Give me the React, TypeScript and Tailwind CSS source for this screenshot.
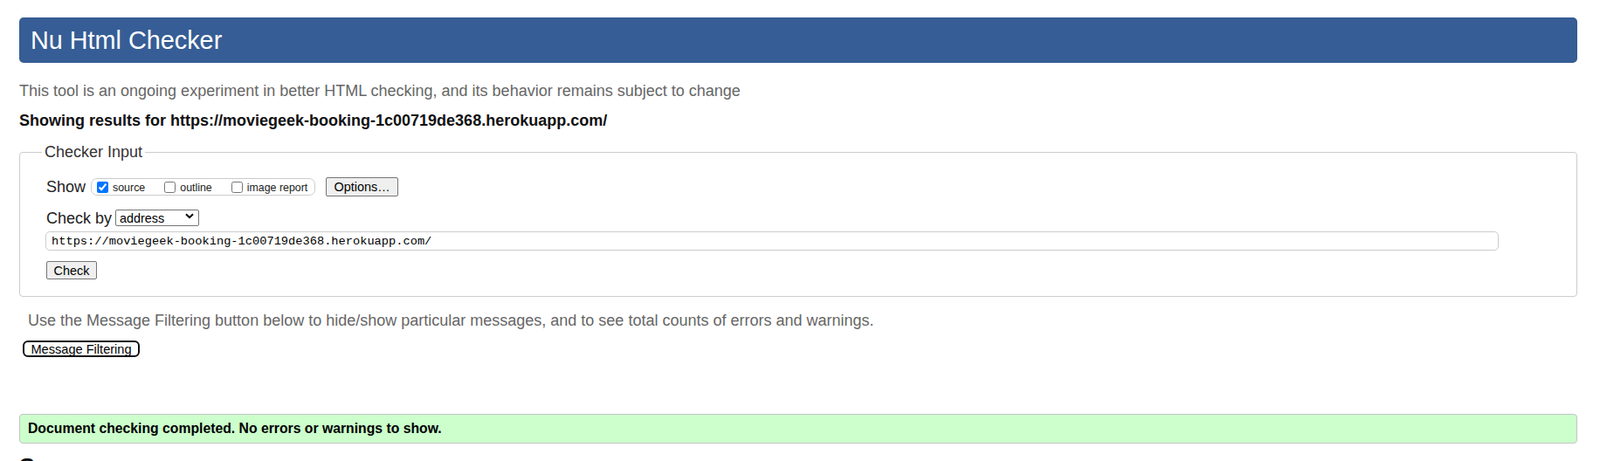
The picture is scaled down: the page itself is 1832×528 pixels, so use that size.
import React from "react";

const URL = "https://moviegeek-booking-1c00719de368.herokuapp.com/";

const ShowOption = ({ label, checked }: { label: string; checked?: boolean }) => (
  <label className="flex items-center">
    <input type="checkbox" defaultChecked={checked} className="h-[13px] w-[13px] accent-[#0075ff]" />
    <span className="ml-[5px] mt-[2px] text-[12.4px] leading-[14px] text-[#222]">{label}</span>
  </label>
);

const App = () => {
  return (
    <div className="min-h-[528px] bg-white pl-[22px] pr-[26px] pt-[20px] font-['Liberation_Sans',Arial,sans-serif] text-[#222]">
      <h1 className="h-[52px] rounded-[5px] bg-[#365d95] pl-[13px] text-[28.8px] font-normal leading-[52px] text-white">
        Nu Html Checker
      </h1>

      <p className="mt-[22px] text-[18px] leading-[20px] text-[#666]">
        This tool is an ongoing experiment in better HTML checking, and its behavior remains subject to change
      </p>
      <p className="mt-[14px] text-[18px] font-bold leading-[20px] text-[#111]">Showing results for {URL}</p>

      <fieldset className="mt-[16px] rounded-[4px] border border-[#ccc] pb-[19px] pl-[30px]">
        <legend className="-ml-[5px] px-[3px] text-[18px] leading-[20px] text-[#333]">Checker Input</legend>

        <div className="mt-[19px] flex h-[22px] items-center">
          <span className="text-[18px] leading-[20px]">Show</span>
          <div className="ml-[6px] flex h-[20px] w-[257px] items-center gap-[22px] rounded-[7px] border border-[#ccc] pl-[6px]">
            <ShowOption label="source" checked />
            <ShowOption label="outline" />
            <ShowOption label="image report" />
          </div>
          <button className="ml-[12px] h-[22px] w-[83px] rounded-[2px] border border-[#767676] bg-[#efefef] text-[14.4px] leading-[18px] text-black">
            Options…
          </button>
        </div>

        <div className="mt-[15px] flex h-[19px] items-center">
          <span className="text-[18px] leading-[20px]">Check by</span>
          <div className="relative ml-[4px]">
            <select className="h-[19px] w-[96px] appearance-none rounded-[2px] border border-[#767676] bg-white pl-[4px] text-[14.4px] leading-[16px] text-black">
              <option>address</option>
              <option>file upload</option>
              <option>text input</option>
            </select>
            <svg className="pointer-events-none absolute right-[6px] top-[6px]" width="10" height="7" viewBox="0 0 10 7">
              <path d="M1 1.2 L5 5.2 L9 1.2" fill="none" stroke="#000" strokeWidth="2" />
            </svg>
          </div>
        </div>

        <input
          type="url"
          defaultValue={URL}
          className="mt-[6px] block h-[22px] w-[1664px] -ml-[1px] rounded-[5px] border border-[#ccc] px-[6px] font-['Liberation_Mono',monospace] text-[13.7px] text-black outline-none"
        />

        <button className="mt-[12px] block h-[21px] w-[58px] rounded-[2px] border border-[#767676] bg-[#efefef] text-[14.4px] leading-[18px] text-black">
          Check
        </button>
      </fieldset>

      <p className="mt-[17px] pl-[10px] text-[18px] leading-[20px] text-[#666]">
        Use the Message Filtering button below to hide/show particular messages, and to see total counts of errors and warnings.
      </p>
      <button className="ml-[4px] mt-[13px] block h-[19px] w-[134px] rounded-[6px] border-2 border-[#101010] bg-white text-[14.6px] leading-[14px] text-black">
        Message Filtering
      </button>

      <div className="mt-[65px] flex h-[34px] items-center rounded-[4px] border border-[#c4c4c4] bg-[#ccffcc] pl-[9px]">
        <span className="text-[15.75px] font-bold text-black">Document checking completed. No errors or warnings to show.</span>
      </div>

      <h2 className="mt-[12px] text-[27px] font-bold leading-[30px] text-[#111]">Source</h2>
    </div>
  );
};

export default App;
